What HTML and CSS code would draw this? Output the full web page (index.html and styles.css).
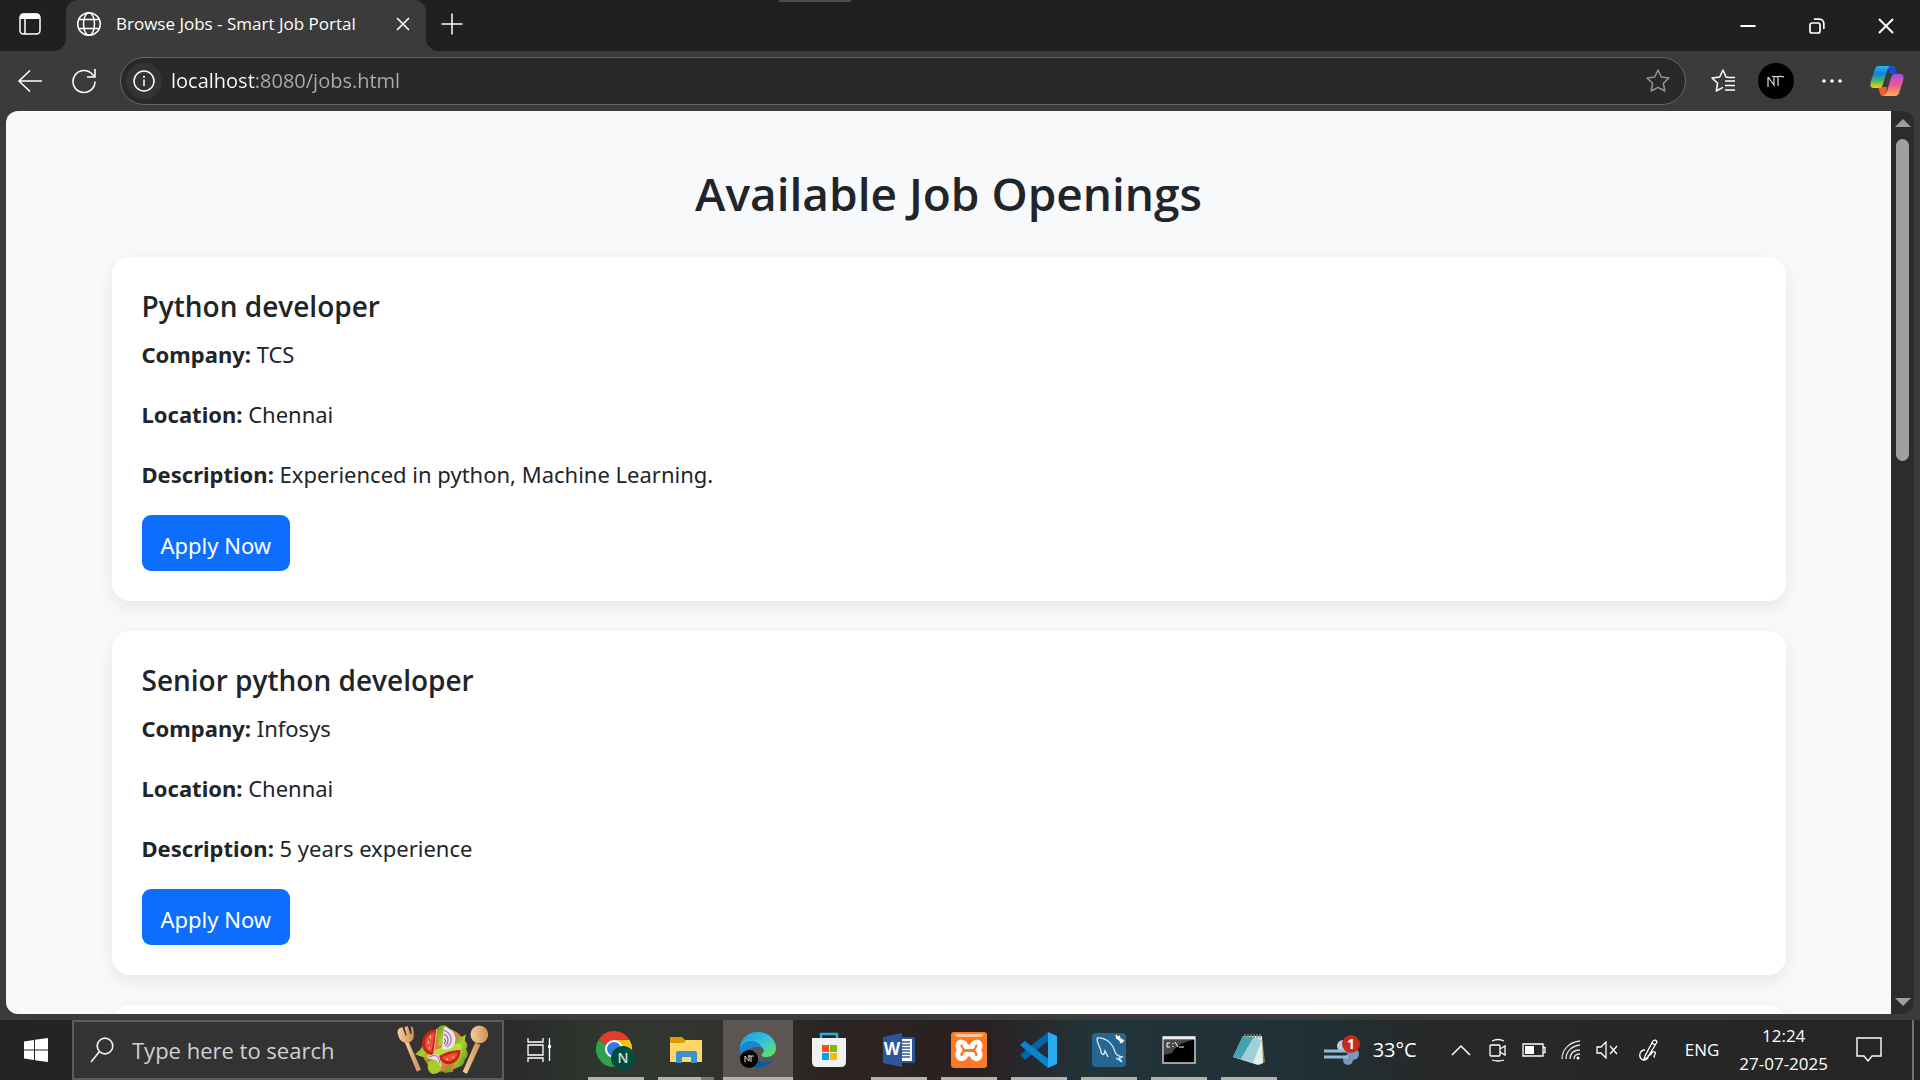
FILE: index.html
```html
<!DOCTYPE html>
<html lang="en">
<head>
<meta charset="utf-8">
<meta name="viewport" content="width=device-width, initial-scale=1">
<title>Browse Jobs - Smart Job Portal</title>
<link rel="stylesheet" href="styles.css">
</head>
<body>
<div class="screen">
  <header class="titlebar">
    <button class="tab-actions" aria-label="Tab actions"><svg width="24" height="24" viewBox="0 0 24 24"><rect x="2" y="2" width="20" height="20" rx="3.500" fill="none" stroke="#fff" stroke-width="1.500"/><path d="M2 7V5a3.500 3.500 0 0 1 3.500-3.500h13A3.500 3.500 0 0 1 22 5v2z" fill="#fff"/><path d="M7 7v15" stroke="#fff" stroke-width="1.500"/></svg></button>
    <div class="tab">
      <svg width="26" height="26" viewBox="0 0 26 26" fill="none" stroke="#fff" stroke-width="1.500"><circle cx="13" cy="13" r="11.300"/><ellipse cx="13" cy="13" rx="5.500" ry="11.300"/><path d="M3 8.500h20M3 17.500h20"/></svg>
      <span class="tab-title">Browse Jobs - Smart Job Portal</span>
      <button class="tab-close" aria-label="Close tab"><svg width="14" height="14" viewBox="0 0 14 14"><path d="M1 1l12 12M13 1L1 13" stroke="#fff" stroke-width="1.600"/></svg></button>
    </div>
    <button class="new-tab" aria-label="New tab"><svg width="22" height="22" viewBox="0 0 22 22"><path d="M11 .5v21M.5 11h21" stroke="#fff" stroke-width="1.500"/></svg></button>
    <div class="grabber"></div>
    <div class="window-buttons">
      <button aria-label="Minimize"><svg width="16" height="16" viewBox="0 0 16 16"><path d="M.5 8h15" stroke="#fff" stroke-width="2"/></svg></button>
      <button aria-label="Restore"><svg width="16" height="16" viewBox="0 0 16 16" fill="none" stroke="#fff" stroke-width="1.700"><rect x="1" y="5" width="10" height="10" rx="2"/><path d="M5 1.200h5.500a4.300 4.300 0 0 1 4.300 4.300V11"/></svg></button>
      <button aria-label="Close"><svg width="16" height="16" viewBox="0 0 16 16"><path d="M1 1l14 14M15 1L1 15" stroke="#fff" stroke-width="2"/></svg></button>
    </div>
  </header>

  <nav class="toolbar" aria-label="Browser toolbar">
    <button class="nav-button" aria-label="Back"><svg width="26" height="24" viewBox="0 0 26 24"><path d="M25 12H2M13 1.500L2 12l11 10.500" fill="none" stroke="#fff" stroke-width="1.600"/></svg></button>
    <button class="nav-button" aria-label="Reload"><svg width="26" height="26" viewBox="0 0 26 26" fill="none" stroke="#fff" stroke-width="1.600"><path d="M24 13.500A11 11 0 1 1 21.500 6.500L23.500 8.500"/><path d="M24 1v8h-8"/></svg></button>
    <div class="address">
      <button class="site-info" aria-label="Site information"><svg width="22" height="22" viewBox="0 0 22 22"><circle cx="11" cy="11" r="10" fill="none" stroke="#fff" stroke-width="1.500"/><path d="M11 9.500V16" stroke="#fff" stroke-width="1.500"/><circle cx="11" cy="6.800" r="1.100" fill="#fff"/></svg></button>
      <input class="url" type="text" aria-label="Address" value="localhost:8080/jobs.html">
      <button class="bookmark" aria-label="Add to favourites"><svg width="26" height="26" viewBox="0 0 26 26"><path d="M13 2l3.300 7 7.700 1-5.600 5.300 1.400 7.700L13 19.300 6.200 23l1.400-7.700L2 10l7.700-1z" fill="none" stroke="#949494" stroke-width="1.500" stroke-linejoin="round"/></svg></button>
    </div>
    <div class="toolbar-actions">
      <button class="favourites" aria-label="Favourites"><svg width="26" height="26" viewBox="0 0 26 26" fill="none" stroke="#fff" stroke-width="1.500" stroke-linejoin="round"><path d="M19 9.500l-3-.5L13 2l-3.300 7L2 10l5.600 5.300L6.200 23l6.800-3.700"/><path d="M15 13h10M15 17.500h10M15 22h10M19 9.500h6"/></svg></button>
      <button class="avatar" aria-label="Profile"><svg width="36" height="36" viewBox="0 0 36 36"><circle cx="18" cy="18" r="18" fill="#000"/><path d="M10 24V14M10 14l6 8V13M20 14v9M14 13c4 2 7-1 12 1" fill="none" stroke="#ddd" stroke-width="1.200"/></svg></button>
      <button class="more" aria-label="Settings and more"><svg width="20" height="6" viewBox="0 0 20 6" fill="#fff"><circle cx="2" cy="3" r="1.800"/><circle cx="10" cy="3" r="1.800"/><circle cx="18" cy="3" r="1.800"/></svg></button>
      <button class="copilot" aria-label="Copilot"><svg width="34" height="32" viewBox="0 0 34 32">
        <defs>
          <linearGradient id="coA" x1="0" y1="0" x2="0" y2="1"><stop offset="0" stop-color="#27b8f3"/><stop offset=".35" stop-color="#1681dd"/><stop offset=".65" stop-color="#3fb56c"/><stop offset="1" stop-color="#ffd500"/></linearGradient>
          <linearGradient id="coB" x1="0" y1="0" x2="0" y2="1"><stop offset="0" stop-color="#a64dee"/><stop offset=".5" stop-color="#f0558f"/><stop offset="1" stop-color="#ffb25a"/></linearGradient>
        </defs>
        <path d="M17 1h6c2 0 2.500 2 3 4l1 4h-7z" fill="#1650d8"/><path d="M8 22h9l-1 9h-3c-3 0-3-3-5-9z" fill="#f45b32"/>
        <path d="M9 1h11c-2 1-3 4-4 8l-3 10c-1 3-2 4-5 4H4c-4 0-4-3-3-7l3-9c1-4 2-6 5-6z" fill="url(#coA)"/>
        <path d="M25 9h5c4 0 4 3 3 7l-3 9c-1 4-2 6-6 6H13c3-1 4-4 5-8l3-10c1-3 2-4 4-4z" fill="url(#coB)"/>
      </svg></button>
    </div>
  </nav>

  <div class="viewport">
    <main class="page">
      <div class="container">
        <h1>Available Job Openings</h1>
        <article class="job">
          <h2>Python developer</h2>
          <p><strong>Company:</strong> TCS</p>
          <p><strong>Location:</strong> Chennai</p>
          <p><strong>Description:</strong> Experienced in python, Machine Learning.</p>
          <button class="apply">Apply Now</button>
        </article>
        <article class="job">
          <h2>Senior python developer</h2>
          <p><strong>Company:</strong> Infosys</p>
          <p><strong>Location:</strong> Chennai</p>
          <p><strong>Description:</strong> 5 years experience</p>
          <button class="apply">Apply Now</button>
        </article>
        <article class="job"></article>
      </div>
    </main>
    <div class="scrollbar">
      <svg width="16" height="8" viewBox="0 0 16 8"><path d="M0 8l8-8 8 8z" fill="#9f9f9f"/></svg>
      <div class="track"><div class="thumb"></div></div>
      <svg width="16" height="8" viewBox="0 0 16 8"><path d="M0 0l8 8 8-8z" fill="#9f9f9f"/></svg>
    </div>
  </div>

  <footer class="taskbar">
    <button class="start" aria-label="Start"><svg width="24" height="24" viewBox="0 0 24 24" fill="#fff"><path d="M0 3.500L10 2v9.500H0zM11 1.800L24 0v11.500H11zM0 12.500h10V22L0 20.500zM11 12.500h13V24l-13-1.800z"/></svg></button>
    <label class="search">
      <svg width="24" height="26" viewBox="0 0 24 26" fill="none" stroke="#eee" stroke-width="1.700"><circle cx="15" cy="9" r="7.800"/><path d="M9.500 14.500L1 25"/></svg>
      <input type="search" aria-label="Search" placeholder="Type here to search">
      <svg width="96" height="52" viewBox="0 0 92 50">
        <defs>
          <linearGradient id="wood" x1="0" x2="1"><stop offset="0" stop-color="#f5cf9c"/><stop offset="1" stop-color="#cf8f55"/></linearGradient>
          <linearGradient id="leaf" x1="0" y1="0" x2="1" y2="1"><stop offset="0" stop-color="#6f9418"/><stop offset=".5" stop-color="#a9d02f"/><stop offset="1" stop-color="#5f8120"/></linearGradient>
        </defs>
        <path d="M11 15l13 29-4 2L8 17z" fill="url(#wood)"/><path d="M3 4l3-1 3 8 1 0-2-8 3-1 3 8 1-1-1-7c3 1 3 5 3 9s-3 7-7 7S3 15 2 11s-1-5 1-7z" fill="url(#wood)"/>
        <path d="M76 18l5 2-13 28-4-2z" fill="url(#wood)"/><circle cx="80" cy="10" r="8.500" fill="url(#wood)"/>
        <circle cx="46" cy="25" r="21" fill="#d98042"/>
        <path d="M27 18c-2 5-5 8-9 11 4 2 8 3 12 3l-1 4 6 1z" fill="url(#leaf)"/>
        <path d="M39 5c3-5 10-5 12 0l2 6-6 12-6-2z" fill="url(#leaf)"/>
        <path d="M56 14c3 0 8-2 11-4l-1 6c3 3 3 5 1 8 3 4 2 8-1 10 0 5-4 8-9 8l-5-14z" fill="url(#leaf)"/>
        <path d="M28 32c8-8 15-10 34-14l1 9-16 7-8-3z" fill="#b9dd3c"/><path d="M32 35c-3 5-2 11 3 13 6 0 10-3 9-13z" fill="#a6ce2b"/><path d="M50 37l5 9-9 1z" fill="#7ba220"/>
        <path d="M39 5c-9 0-14 7-14 14 0 6 4 11 11 11z" fill="#c92416"/><path d="M37 8c-6 1-9 6-9 11 0 4 2 7 6 8z" fill="#ec5038"/><path d="M33 11v3M31 16v3M32 22v2" stroke="#ffd6ae"/><path d="M39 5l-3 25" stroke="#f4b49c"/>
        <path d="M41 31c3 11 20 11 21-6-8 0-14 2-21 6z" fill="#c92416"/><path d="M44 32c4 6 13 5 15-4-6 0-10 2-15 4z" fill="#ec5038"/><path d="M48 34h2M54 32h2" stroke="#ffd6ae"/>
        <path d="M46 3c10 1 15 13 7 20-3 2-7 2-9 1z" fill="#eee2ee"/><path d="M46 6c8 3 9 12 3 16M46 10c5 2 5 8 1 11M46 14c2 1 2 3 0 5" fill="none" stroke="#a86ba4" stroke-width="1.200"/>
        <path d="M30 33c4-5 9-5 12-1l1 9-4-6z" fill="#eee2ee"/><path d="M32 32c4-3 7-2 9 1l1 5" fill="none" stroke="#a86ba4"/>
      </svg>
    </label>
    <button class="task-view" aria-label="Task view"><svg width="26" height="26" viewBox="0 0 26 26" fill="none" stroke="#fff" stroke-width="1.300"><path d="M1 1v4h15V1M1 25v-4h15v4M1 8h15v10H1zM22.500 1v23"/><path d="M21 8h3v3h-3z" fill="#fff" stroke="none"/></svg></button>

    <div class="apps">
      <button class="app running" aria-label="Chrome"><svg width="40" height="40" viewBox="0 0 40 40"><path d="M18 19L2.400 10A18 18 0 0 1 33.600 10z" fill="#e33b2e"/><path d="M18 19L2.400 10A18 18 0 0 0 18 37l8-13z" fill="#2fa14f"/><path d="M18 10h15.600A18 18 0 0 1 18 37l8-14z" fill="#fcc21b"/><circle cx="18" cy="19" r="9" fill="#fff"/><circle cx="18" cy="19" r="7" fill="#3479e8"/><circle cx="27" cy="28" r="12" fill="#004d40"/><text x="27" y="33" text-anchor="middle" class="badge-letter">N</text></svg></button>
      <button class="app running grouped" aria-label="File Explorer"><svg width="34" height="28" viewBox="0 0 34 28"><path d="M1 1h12l3 3h17v22H1z" fill="#dd9a08"/><path d="M1 7h14l2-3h15l1 1v21H1z" fill="#ffd766"/><path d="M7 27V17q0-2 2-2h17q2 0 2 2v10h-6v-6h-9v6z" fill="#3c91d5"/></svg></button>
      <button class="app running active" aria-label="Edge"><svg width="38" height="38" viewBox="0 0 38 38"><defs><linearGradient id="edgeTop" x1="0" y1="0" x2="1" y2="1"><stop offset="0" stop-color="#189bd8"/><stop offset=".5" stop-color="#34c1df"/><stop offset="1" stop-color="#65eb48"/></linearGradient></defs><path d="M1 18C1 7 10 1 19 1c10 0 18 7 18 16 0 6-5 9-10 9-4 0-5-2-4-3 3-2 2-7-3-7-8 0-17 2-11 17C3 29 1 24 1 18z" fill="#1685d2"/><path d="M1 18C1 7 10 1 19 1c10 0 18 7 18 16 0 6-5 9-10 9-4 0-5-2-4-3 3-2 2-5-1-8C17 8 4 8 1 18z" fill="url(#edgeTop)"/><path d="M15 18c-3 11 9 17 19 10-4 8-16 12-25 5-4-9 1-14 6-15z" fill="#0c59a4"/><circle cx="10" cy="28" r="9" fill="#000"/><path d="M6 31v-6l4 5v-6M12 25v6M9 25h6" fill="none" stroke="#ddd"/></svg></button>
      <button class="app" aria-label="Microsoft Store"><svg width="36" height="36" viewBox="0 0 36 36"><path d="M10 8V2h16v6" fill="none" stroke="#29aee4" stroke-width="2.500"/><path d="M1 6h34v24q0 5-5 5H6q-5 0-5-5z" fill="#f2f2f2"/><path d="M11 13h7v7h-7z" fill="#f25022"/><path d="M19 13h7v7h-7z" fill="#7fba00"/><path d="M11 21h7v7h-7z" fill="#00a4ef"/><path d="M19 21h7v7h-7z" fill="#ffb900"/></svg></button>
      <button class="app running" aria-label="Word"><svg width="34" height="34" viewBox="0 0 34 34"><path d="M18 4h13q2 0 2 2v22q0 2-2 2H18z" fill="#2b579a"/><path d="M18 6h12v22H18z" fill="#fff"/><path d="M19 9h9M19 12h9M19 15h9M19 18h9M19 21h9M19 24h9" stroke="#2b579a" stroke-width="1.500"/><path d="M1 4l19-4v34L1 30z" fill="#2b579a"/><text x="10" y="22" text-anchor="middle" class="word-letter">W</text></svg></button>
      <button class="app running" aria-label="XAMPP"><svg width="36" height="36" viewBox="0 0 36 36"><rect width="36" height="36" rx="3" fill="#fb7a24"/><path d="M4 2h28q0 3-3 3H7q-3 0-3-3z" fill="#ffc49a"/><path d="M14 12c-5-5-10 1-5 6-5 5 0 12 5 7 0-3 1-3 4-3s4 0 4 3c5 5 10-2 5-7 5-5 0-11-5-6 0 3-1 3-4 3s-4 0-4-3z" fill="none" stroke="#fff" stroke-width="5" stroke-linejoin="round"/><path d="M12 18.500h12" stroke="#fb7a24" stroke-width="3"/></svg></button>
      <button class="app running" aria-label="Visual Studio Code"><svg width="38" height="38" viewBox="0 0 38 38"><path d="M28 10L5 29l-4-4q-1-1 0-2L28 1z" fill="#0065a9"/><path d="M28 28L5 10l-4 3q-1 1 0 2l27 22z" fill="#0a84d0"/><path d="M28 1l9 4v28l-9 4z" fill="#28aaf2"/></svg></button>
      <button class="app running" aria-label="MySQL Workbench"><svg width="34" height="34" viewBox="0 0 34 34"><rect width="34" height="34" rx="4" fill="#286692"/><path d="M5 5c9-1 16 6 18 14 1 3 3 4 7 5l-3 1 3 4-6-4M5 5c0 7 4 9 4 14 1 3 3 4 4-1l3 6" fill="none" stroke="#dbe8f0" stroke-width="1.300"/><path d="M25 4l6 5" stroke="#fff" stroke-width="3"/><path d="M24 2l1 3 3-2M28 10l4-3" stroke="#fff" stroke-width="1.500" fill="none"/></svg></button>
      <button class="app running" aria-label="Command Prompt"><svg width="34" height="28" viewBox="0 0 34 28"><rect x="1" y="1" width="32" height="26" fill="#000" stroke="#ccc" stroke-width="1.500"/><path d="M1 2h32" stroke="#eee" stroke-width="3"/><path d="M2 4h29C20 6 14 10 10 17L2 19z" fill="#484848"/><path d="M8 7H5v4h3M11 7v1M11 10v1M13 6l3 5M17 11h5" fill="none" stroke="#fff"/></svg></button>
      <button class="app running" aria-label="Notepad"><svg width="36" height="34" viewBox="0 0 36 34"><path d="M31 5l3 24-5 3z" fill="#a77a3b"/><path d="M12 3h19l1 27-5 2L2 24z" fill="#e0f1f2"/><path d="M12 3L2 24l8 2L23 4z" fill="#44a1af"/><path d="M23 4L10 26l12 4L31 7z" fill="#9ed1d7"/><path d="M14 1v4M17 1v4M20 1v4M23 1v4M26 1v4M29 1v4" stroke="#888" stroke-width="1.300"/></svg></button>
    </div>

    <div class="tray">
      <button class="weather"><svg width="38" height="32" viewBox="0 0 38 32"><circle cx="20" cy="12" r="6" fill="#b8cee8"/><circle cx="30" cy="20" r="6" fill="#779bc5"/><circle cx="25" cy="26" r="5" fill="#7899bb"/><path d="M1 17h23M1 23h24" stroke="#98bad8" stroke-width="3"/><circle cx="28" cy="10" r="9" fill="#c42b1c"/><text x="28" y="15" text-anchor="middle" class="alert-count">1</text></svg><span>33°C</span></button>
      <div class="tray-icons">
      <button class="chevron" aria-label="Show hidden icons"><svg width="20" height="12" viewBox="0 0 20 12"><path d="M1 11l9-9 9 9" fill="none" stroke="#fff" stroke-width="1.500"/></svg></button>
      <button aria-label="Camera"><svg width="18" height="24" viewBox="0 0 18 24" fill="none" stroke="#fff" stroke-width="1.300"><rect x="1" y="7" width="10" height="11" rx="1"/><path d="M11 11l5-3v9l-5-3M3 3q6-3 12 0M3 22q6 2 12 0"/></svg></button>
      <button aria-label="Battery"><svg width="24" height="14" viewBox="0 0 24 14"><path d="M1 1h20v12H1zM21 4.500h2v5h-2" fill="none" stroke="#fff" stroke-width="1.300"/><path d="M3 3h9v8H3z" fill="#fff"/></svg></button>
      <button aria-label="Wi-Fi"><svg width="20" height="20" viewBox="0 0 20 20" fill="none" stroke="#ddd" stroke-width="1.300"><path d="M1 19C1 9 9 2 19 1M5 19C5 11 11 6 19 5M9 19c0-6 4-9 10-9M13 19c0-3 2-5 6-5"/><circle cx="17" cy="18" r="1.500" fill="#fff" stroke="none"/></svg></button>
      <button aria-label="Volume"><svg width="22" height="18" viewBox="0 0 22 18" fill="none" stroke="#fff" stroke-width="1.300"><path d="M1 6h4l5-5v16l-5-5H1zM14 5l7 8M21 5l-7 8"/></svg></button>
      <button class="pen" aria-label="Ink workspace"><svg width="22" height="22" viewBox="0 0 22 22" fill="none" stroke="#fff" stroke-width="1.300"><path d="M6 17L14 2q3-2 4 1L9 18l-4 2zM10 16c3 1 2-5 6-3 2 1-3 5 0 5M6 11c-6 0-7 8-2 10 4 1 6-3 5-5M8 13l5-9 3 2"/></svg></button>
      </div>
      <span class="language">ENG</span>
      <div class="clock"><time>12:24</time><time datetime="2025-07-27">27-07-2025</time></div>
      <button class="notifications" aria-label="Notifications"><svg width="26" height="26" viewBox="0 0 26 26"><path d="M1 1h24v18H16l-4 5-4-5H1z" fill="none" stroke="#fff" stroke-width="1.400"/></svg></button>
    </div>
  </footer>
</div>
</body>
</html>
```
FILE: styles.css
```css
* { box-sizing: border-box; }
body { margin: 0; font-family: "Open Sans", "Noto Sans", sans-serif; color: #212529; background: #3b3b3b; }
button { display: flex; align-items: center; justify-content: center; padding: 0; border: 0; background: none; color: inherit; font: inherit; }
input { min-width: 0; padding: 0; border: 0; outline: 0; background: none; color: inherit; font: inherit; }
svg { flex: none; }

.screen { display: flex; flex-direction: column; height: 100vh; overflow: hidden; }

/* Tab strip */
.titlebar { position: relative; display: flex; flex: 0 0 51px; background: #202020; color: #fff; }
.tab-actions { width: 60px; padding-bottom: 3px; }
.tab { position: relative; display: flex; align-items: center; width: 360px; margin-left: 6px; padding: 0 16px 3px 10px; border-radius: 12px 12px 0 0; background: #3b3b3b; }
.tab::before, .tab::after { content: ""; position: absolute; bottom: 0; width: 12px; height: 12px; }
.tab::before { right: 100%; background: radial-gradient(circle at 0 0, #202020 12px, #3b3b3b 12px); }
.tab::after { left: 100%; background: radial-gradient(circle at 100% 0, #202020 12px, #3b3b3b 12px); }
.tab-title { flex: 1; margin-left: 14px; font-size: 17px; line-height: 24px; white-space: nowrap; }
.new-tab { width: 52px; padding-bottom: 4px; }
.grabber { position: absolute; top: 0; left: 779px; width: 72px; height: 2px; background: #4c4c4c; }
.window-buttons { display: flex; margin-left: auto; }
.window-buttons button { width: 69px; }

/* Address row */
.toolbar { display: flex; flex: 0 0 60px; align-items: center; color: #fff; background: #3b3b3b; }
.nav-button { width: 54px; margin-left: 3px; }
.nav-button + .nav-button { width: 48px; margin-left: 3px; }
.address { display: flex; flex: 1; align-items: center; height: 48px; margin-left: 12px; padding: 0 14px 0 5px; border: 1px solid #666; border-radius: 24px; background: #292929; }
.site-info { width: 36px; height: 36px; border-radius: 50%; background: #333; }
.url { flex: 1; margin: 0 9px; font-size: 20px; line-height: 30px; background: linear-gradient(90deg, #fff 84px, #adadad 84px); background-clip: text; -webkit-background-clip: text; -webkit-text-fill-color: transparent; }
.toolbar-actions { display: flex; align-items: center; gap: 22px; padding: 0 16px 0 24px; }
.more { width: 32px; }

/* Job portal page */
.viewport { display: flex; flex: 1; min-height: 0; margin: 0 6px 6px; border-radius: 12px; overflow: hidden; }
.page { flex: 1; overflow: hidden; padding: 0 18px; background: #f8f9fb; font-family: "Noto Sans", "Open Sans", sans-serif; font-size: 22px; line-height: 36px; }
.container { max-width: 1674px; margin: 0 auto; padding-top: 52px; }
h1 { margin: 0 0 34px; font-family: "Open Sans", sans-serif; font-size: 46px; line-height: 60px; font-weight: 600; text-align: center; }
.job { min-height: 344px; margin-bottom: 30px; padding: 31px 30px 29px; border-radius: 18px; background: #fff; box-shadow: 0 6px 18px rgba(0, 0, 0, 0.08); }
h2 { margin: 0 0 12px; font-family: "Open Sans", sans-serif; font-size: 28px; line-height: 36px; font-weight: 600; }
p { margin: 0 0 24px; }
p:last-of-type { margin-bottom: 23px; }
strong { font-weight: 700; }
.apply { height: 56px; padding: 3px 19px 0; border-radius: 9px; background: #0d6efd; color: #fff; }

.scrollbar { display: flex; flex: 0 0 23px; flex-direction: column; align-items: center; padding: 8px 0; background: #2c2c2c; }
.track { flex: 1; padding: 12px 0; }
.thumb { width: 13px; height: 38%; border-radius: 7px; background: #9f9f9f; }

/* Taskbar */
.taskbar { display: flex; flex: 0 0 60px; color: #fff; background: linear-gradient(90deg, #242424 0, #292929 26%, #2f352f 31%, #323530 36%, #2c2422 43%, #2a2021 51%, #22343a 57%, #1f3136 68%, #282828 75%, #252525 100%); }
.start { width: 67px; padding-left: 4px; }
.search { display: flex; align-items: center; width: 432px; margin-left: 5px; padding: 0 10px 0 16px; border: 2px solid #5c5c5c; background: #333; }
.search input { flex: 1; margin-left: 18px; font-size: 22px; line-height: 30px; }
.search input::placeholder { color: #d0d0d0; opacity: 1; }
.task-view { width: 72px; }
.apps { display: flex; margin-left: 5px; }
.app { position: relative; width: 70px; }
.app.running::after { content: ""; position: absolute; left: 7px; right: 7px; bottom: 0; height: 3px; background: #b5b1ae; }
.app.grouped::after { background: linear-gradient(90deg, #b5b1ae 43px, #7b7975 43px); }
.app.active { margin: 0 1px 0 2px; background: #5d5551; }
.app.active::after { left: 0; right: 0; }
.badge-letter { font-size: 14px; font-weight: 600; fill: #cfe0dc; }
.word-letter { font-size: 17px; font-weight: 700; fill: #fff; }
.alert-count { font-size: 14px; font-weight: 700; fill: #fff; }
.tray { display: flex; align-items: center; margin-left: auto; margin-right: 6px; border-right: 2px solid #707070; }
.weather { gap: 12px; font-size: 20px; line-height: 28px; }
.tray-icons { display: flex; align-items: center; gap: 15px; margin-left: 34px; }
.tray-icons .chevron { margin-right: 3px; }
.tray-icons .pen { margin-left: 6px; }
.language { margin-left: 24px; font-size: 17px; line-height: 24px; }
.clock { display: flex; flex-direction: column; align-items: center; margin-left: 20px; font-size: 17px; line-height: 28px; }
.notifications { margin: 0 30px 0 28px; }
```
